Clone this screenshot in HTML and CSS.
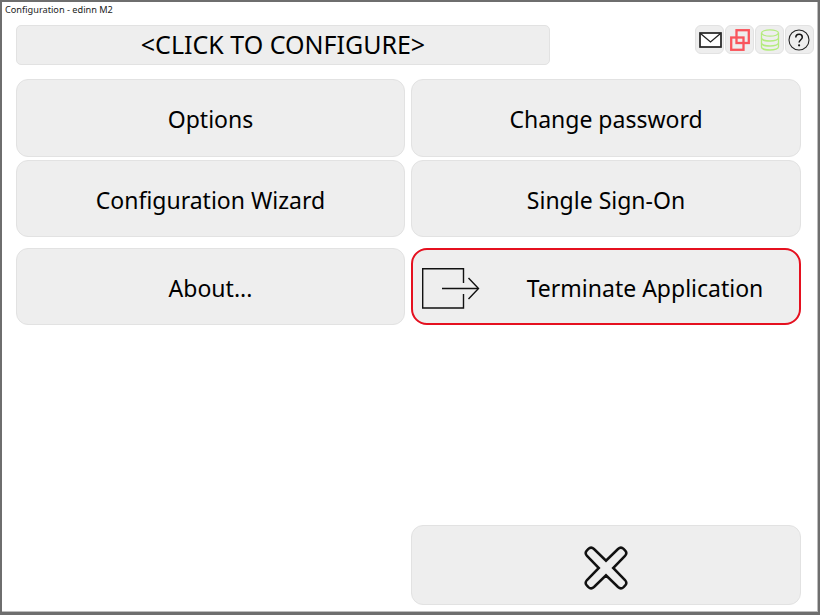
FILE: index.html
```html
<!DOCTYPE html>
<html lang="en">
<head>
  <meta charset="UTF-8" />
  <title>Configuration - edinn M2</title>
  <link rel="stylesheet" href="styles.css">
</head>
<body>
  <div class="window">
    <div class="title-bar">Configuration - edinn M2</div>

    <div class="top-row">
      <button class="btn station-button">&lt;CLICK TO CONFIGURE&gt;</button>
      <div class="tools">
        <button class="btn tool-button">
          <svg class="mail-icon" width="23" height="16" viewBox="0 0 23 16" fill="none">
            <rect x="1" y="1" width="21" height="14" fill="#fff" stroke="#222" stroke-width="1.700"/>
            <path d="M1.500 1.500l10 8.500 10-8.500" stroke="#222" stroke-width="1.300"/>
          </svg>
        </button>
        <button class="btn tool-button">
          <svg width="20" height="22" viewBox="0 0 20 22" fill="none" stroke="#f9555c" stroke-width="2.300">
            <rect x="1.200" y="8.500" width="12.300" height="12.300"/>
            <rect x="6.500" y="1.200" width="12.300" height="12.800"/>
          </svg>
        </button>
        <button class="btn tool-button">
          <svg width="20" height="22" viewBox="0 0 20 22" fill="none" stroke="#b4ec7e" stroke-width="1.300">
            <ellipse cx="10" cy="4" rx="8.500" ry="3.200"/>
            <path d="M1.500 4v14c0 1.700 3.800 3 8.500 3s8.500-1.300 8.500-3V4"/>
            <path d="M1.500 9c0 1.700 3.800 3 8.500 3s8.500-1.300 8.500-3"/>
            <path d="M1.500 14c0 1.700 3.800 3 8.500 3s8.500-1.300 8.500-3"/>
          </svg>
        </button>
        <button class="btn tool-button help-button">
          <svg width="22" height="22" viewBox="0 0 22 22" fill="none">
            <circle cx="11" cy="11" r="10" stroke="#222" stroke-width="1.100"/>
            <path d="M7.800 8.600c0-2 1.400-3.300 3.300-3.300 1.900 0 3.200 1.200 3.200 2.900 0 2.500-3.200 2.600-3.200 5.300" stroke="#111" stroke-width="1.500"/>
            <circle cx="11.100" cy="16.300" r="1.100" fill="#111"/>
          </svg>
        </button>
      </div>
    </div>

    <div class="menu-grid">
      <button class="btn menu-button">Options</button>
      <button class="btn menu-button">Change password</button>
      <button class="btn menu-button">Configuration Wizard</button>
      <button class="btn menu-button">Single Sign-On</button>
      <button class="btn menu-button about">About...</button>
      <button class="btn menu-button terminate">
        <svg class="exit-icon" width="58" height="42" viewBox="0 0 58 42" fill="none" stroke="#111" stroke-width="1.400">
          <path d="M41.500 15V.7H.7V40H41.500V26"/>
          <path d="M20 20.500H56"/>
          <path d="M46.500 10l10 10.500-10 10.500"/>
        </svg>
        Terminate Application
      </button>
    </div>

    <div class="bottom-row">
      <button class="btn close-button">
        <svg class="close-icon" width="44" height="44" viewBox="0 0 44 44" fill="none">
          <path d="M10 3c-1.900-1.700-4-1.600-5.600-.1L3 4.300C1.400 5.900 1.300 8.100 3 10l11.800 12L3 34c-1.700 1.900-1.600 4.100 0 5.700l1.400 1.400c1.600 1.500 3.700 1.600 5.600-.1l12-11.700L34 41c1.900 1.700 4 1.600 5.600.1l1.400-1.400c1.600-1.600 1.700-3.800 0-5.700L29.200 22 41 10c1.700-1.900 1.600-4.100 0-5.700l-1.400-1.400C38 1.400 35.900 1.300 34 3L22 14.700z" stroke="#111" stroke-width="2.500"/>
        </svg>
      </button>
    </div>
  </div>
</body>
</html>
```

FILE: styles.css
```css
* { margin: 0; padding: 0; box-sizing: border-box; }

body, html {
  height: 100%;
  font-family: 'Noto Sans', 'Open Sans', sans-serif;
  background: #ffffff;
  overflow: hidden;
}

.window {
  display: flex;
  flex-direction: column;
  height: 615px;
  padding: 0 17px 7px 14px;
  border: 2px solid #6e6e6e;
  border-bottom-width: 3px;
  box-shadow: inset -1px -1px 0 #bdbdbd;
  background: #ffffff;
}

.title-bar {
  height: 23px;
  margin-left: -11px;
  padding-top: 2px;
  font-size: 9.2px;
  line-height: 12px;
  color: #222222;
}

.btn {
  display: flex;
  justify-content: center;
  align-items: center;
  background: #eeeeee;
  border: 1px solid #e2e2e2;
  font-family: inherit;
  color: #000000;
}

.top-row {
  display: flex;
  justify-content: space-between;
  align-items: flex-start;
  height: 54px;
}

.station-button {
  width: 534px;
  height: 40px;
  padding-bottom: 2px;
  border-radius: 5px;
  font-size: 25px;
}

.tools {
  display: flex;
  gap: 1px;
  margin-right: -13px;
}

.tool-button {
  width: 29px;
  height: 29px;
  border-radius: 6px;
}

.mail-icon {
  margin-left: 1px;
}

.help-button {
  padding-right: 2px;
}

.menu-grid {
  display: grid;
  grid-template-columns: 389px 390px;
  grid-template-rows: 78px 77px 77px;
  column-gap: 6px;
  row-gap: 3px;
}

.menu-button {
  position: relative;
  padding-top: 2px;
  border-radius: 12px;
  font-size: 23px;
}

.about, .terminate {
  margin-top: 8px;
  height: 77px;
}

.terminate {
  border: 2px solid #e5101f;
  border-radius: 16px;
  padding-left: 78px;
}

.exit-icon {
  position: absolute;
  left: 9px;
  top: 18px;
}

.bottom-row {
  display: flex;
  justify-content: flex-end;
  margin-top: auto;
}

.close-button {
  width: 390px;
  height: 80px;
  padding-top: 6px;
  border-radius: 12px;
}
```
